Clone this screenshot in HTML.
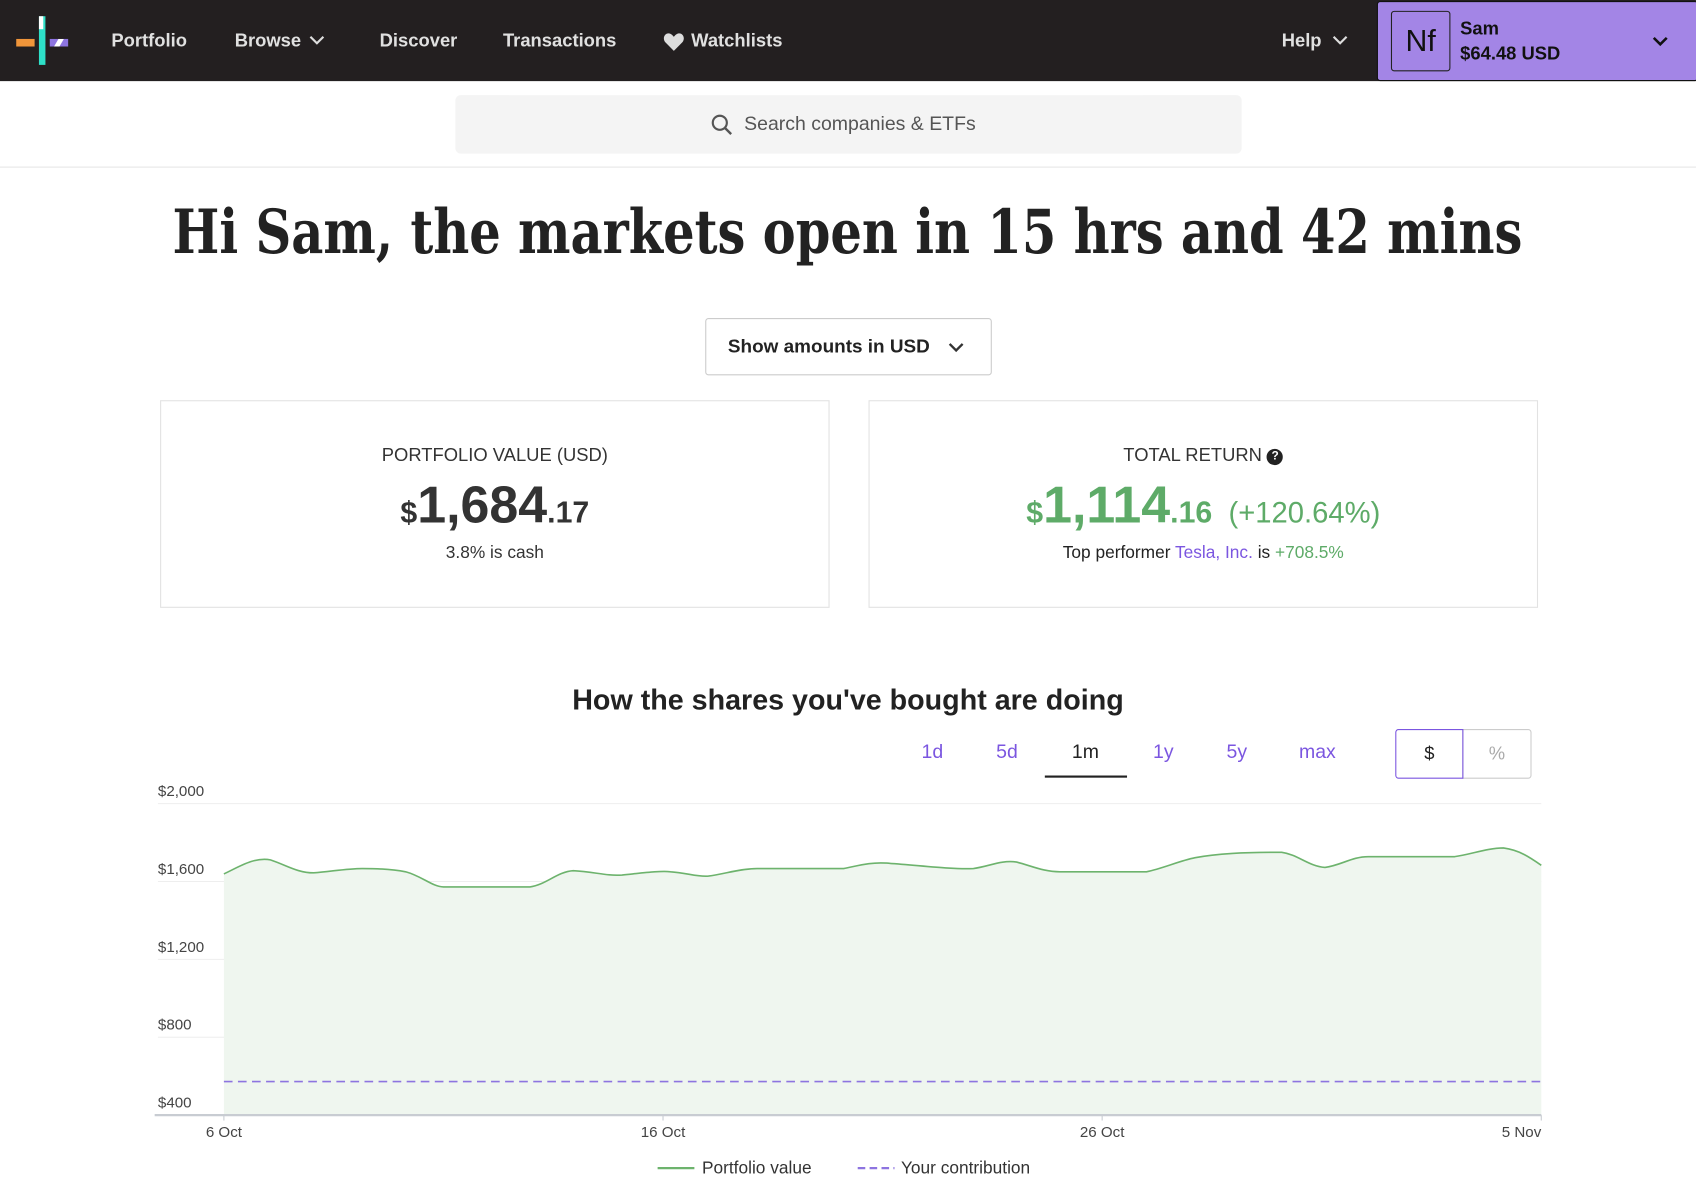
<!DOCTYPE html>
<html><head><meta charset="utf-8"><style>
html,body{margin:0;padding:0;width:1696px;height:1186px;overflow:hidden;background:#fff;}
#w{position:absolute;left:0;top:0;width:1568px;height:1097px;transform:scale(1.0816);transform-origin:0 0;font-family:"Liberation Sans",Arial,sans-serif;color:#222;}
.a{position:absolute;white-space:nowrap;}
.nav{position:absolute;left:0;top:0;width:1568px;height:75px;background:#231f20;}
.ni{position:absolute;top:28px;font-size:17px;font-weight:bold;color:#e0e0e0;line-height:20px;}
.c{text-align:center;}
</style></head><body><div id="w">
<div class="nav"></div>
<div class="a" style="left:15px;top:36px;width:17px;height:7px;background:#f0953a"></div>
<div class="a" style="left:36px;top:15px;width:6px;height:45px;background:#2ee0c8"></div>
<div class="a" style="left:36px;top:15px;width:4px;height:12px;background:#fff"></div>
<div class="a" style="left:46px;top:36px;width:17px;height:7px;background:#8d74e0"></div>
<div class="a" style="left:52px;top:36px;width:5px;height:7px;background:#fff;transform:skewX(-30deg)"></div>
<div class="ni" style="left:103px">Portfolio</div>
<div class="ni" style="left:217px">Browse</div>
<svg class="a" style="left:286px;top:32px" width="14" height="10"><path d="M1 2 L7 8 L13 2" stroke="#ddd" stroke-width="2" fill="none"/></svg>
<div class="ni" style="left:351px">Discover</div>
<div class="ni" style="left:465px">Transactions</div>
<svg class="a" style="left:613px;top:30px" width="20" height="18"><path d="M10 17 L2 9 C-1 5 2 0 6 1 C8 1.5 9 3 10 4 C11 3 12 1.5 14 1 C18 0 21 5 18 9 Z" fill="#ddd"/></svg>
<div class="ni" style="left:639px">Watchlists</div>
<div class="ni" style="left:1185px">Help</div>
<svg class="a" style="left:1232px;top:32px" width="14" height="10"><path d="M1 2 L7 8 L13 2" stroke="#ddd" stroke-width="2" fill="none"/></svg>
<div class="a" style="left:1273px;top:1px;width:297px;height:74px;background:#a385e6;border:1px solid #111;border-radius:3px;box-sizing:border-box"></div>
<div class="a" style="left:1286px;top:10px;width:55px;height:56px;border:1px solid #222;border-radius:3px;box-sizing:border-box;font-size:28px;line-height:54px;text-align:center;color:#111">Nf</div>
<div class="a" style="left:1350px;top:17px;font-size:17px;font-weight:bold;color:#111">Sam</div>
<div class="a" style="left:1350px;top:40px;font-size:17px;font-weight:bold;color:#111">$64.48 USD</div>
<svg class="a" style="left:1527px;top:33px" width="16" height="10"><path d="M2 2 L8 8 L14 2" stroke="#111" stroke-width="2.4" fill="none"/></svg>
<div class="a" style="left:421px;top:88px;width:727px;height:54px;background:#f4f4f4;border-radius:5px"></div>
<svg class="a" style="left:657px;top:105px" width="22" height="22"><circle cx="8.5" cy="8.5" r="6.5" stroke="#555" stroke-width="2" fill="none"/><path d="M13 13 L19 19" stroke="#555" stroke-width="2.2"/></svg>
<div class="a" style="left:688px;top:104px;font-size:18px;color:#555">Search companies &amp; ETFs</div>
<div class="a" style="left:0;top:154px;width:1568px;height:1px;background:#e6e6e6"></div>
<div class="a" style="left:0;top:182px;width:1568px;text-align:center"><span id="h" style="display:inline-block;font-family:'DejaVu Serif','Liberation Serif',serif;font-weight:bold;font-size:56px;line-height:66px;color:#222;transform-origin:center">Hi Sam, the markets open in 15 hrs and 42 mins</span></div>
<div class="a" style="left:652px;top:294px;width:265px;height:53px;border:1px solid #ccc;border-radius:3px;box-sizing:border-box"></div>
<div class="a" style="left:673px;top:310px;font-size:17.5px;font-weight:bold;color:#222">Show amounts in USD</div>
<svg class="a" style="left:877px;top:316px" width="14" height="10"><path d="M1 2 L7 8 L13 2" stroke="#333" stroke-width="2.2" fill="none"/></svg>
<div class="a" style="left:148px;top:370px;width:619px;height:192px;border:1px solid #e2e2e2;box-sizing:border-box"></div>
<div class="a" style="left:803px;top:370px;width:619px;height:192px;border:1px solid #e2e2e2;box-sizing:border-box"></div>
<div class="a c" style="left:148px;top:411px;width:619px;font-size:17px;color:#333">PORTFOLIO VALUE (USD)</div>
<div class="a c" style="left:148px;top:440px;width:619px;color:#333;font-weight:bold"><span style="font-size:28px">$</span><span style="font-size:48px">1,684</span><span style="font-size:28px">.17</span></div>
<div class="a c" style="left:148px;top:503px;width:619px;font-size:16px;color:#333">3.8% is cash</div>
<div class="a c" style="left:803px;top:411px;width:619px;font-size:17px;color:#333">TOTAL RETURN <span style="display:inline-block;width:15px;height:15px;border-radius:50%;background:#222;color:#fff;font-size:11px;line-height:15px;font-weight:bold;vertical-align:1px">?</span></div>
<div class="a c" style="left:803px;top:440px;width:619px;color:#5eab68"><b><span style="font-size:28px">$</span><span style="font-size:48px">1,114</span><span style="font-size:28px">.16</span></b><span style="font-size:27px">&nbsp;&nbsp;(+120.64%)</span></div>
<div class="a c" style="left:803px;top:503px;width:619px;font-size:16px;color:#222">Top performer <span style="color:#7b56e0">Tesla, Inc.</span> is <span style="color:#5eab68">+708.5%</span></div>
<div class="a c" style="left:0;top:632px;width:1568px;font-size:26.5px;font-weight:bold;color:#222">How the shares you've bought are doing</div>
<div class="a" style="left:852px;top:685px;font-size:18px;color:#7b56e0">1d</div>
<div class="a" style="left:921px;top:685px;font-size:18px;color:#7b56e0">5d</div>
<div class="a" style="left:991px;top:685px;font-size:18px;color:#222">1m</div>
<div class="a" style="left:966px;top:717px;width:76px;height:2px;background:#222"></div>
<div class="a" style="left:1066px;top:685px;font-size:18px;color:#7b56e0">1y</div>
<div class="a" style="left:1134px;top:685px;font-size:18px;color:#7b56e0">5y</div>
<div class="a" style="left:1201px;top:685px;font-size:18px;color:#7b56e0">max</div>
<div class="a" style="left:1352px;top:674px;width:64px;height:46px;border:1px solid #ccc;box-sizing:border-box;border-radius:0 3px 3px 0;text-align:center;line-height:44px;font-size:17px;color:#aaa">%</div>
<div class="a" style="left:1290px;top:674px;width:63px;height:46px;border:1px solid #7b56e0;box-sizing:border-box;border-radius:3px 0 0 3px;text-align:center;line-height:44px;font-size:17px;color:#222">$</div>
<svg class="a" style="left:0;top:720px" width="1568" height="377" font-family="Liberation Sans,Arial,sans-serif" font-size="14" fill="#444">
<text x="146" y="16">$2,000</text><text x="146" y="88">$1,600</text><text x="146" y="160">$1,200</text><text x="146" y="232">$800</text><text x="146" y="304">$400</text>
<g stroke="#eee" stroke-width="1"><line x1="146" y1="23" x2="1425" y2="23"/><line x1="146" y1="95" x2="1425" y2="95"/><line x1="146" y1="167" x2="1425" y2="167"/><line x1="146" y1="239" x2="1425" y2="239"/></g>
<path d="M207 88 C220 82 235 72 250 75 C265 80 275 87 290 87 C305 86 320 83 335 83 C350 83 365 84 375 86 C390 90 400 100 410 100 L490 100 C505 98 515 86 530 85 C550 86 560 90 575 89 C595 87 610 85 620 86 C635 87 645 91 655 90 C670 88 685 83 700 83 L780 83 C795 80 805 77 820 78 C850 80 880 84 900 83 C915 81 925 75 940 77 C955 81 965 86 980 86 L1060 86 C1075 83 1090 76 1105 73 C1125 69 1150 68 1185 68 C1200 70 1210 81 1225 82 C1240 80 1250 72 1265 72 L1345 72 C1360 70 1375 64 1390 64 C1405 66 1415 73 1425 80 L1425 311 L207 311 Z" fill="#eff6ef" stroke="none"/>
<path d="M207 88 C220 82 235 72 250 75 C265 80 275 87 290 87 C305 86 320 83 335 83 C350 83 365 84 375 86 C390 90 400 100 410 100 L490 100 C505 98 515 86 530 85 C550 86 560 90 575 89 C595 87 610 85 620 86 C635 87 645 91 655 90 C670 88 685 83 700 83 L780 83 C795 80 805 77 820 78 C850 80 880 84 900 83 C915 81 925 75 940 77 C955 81 965 86 980 86 L1060 86 C1075 83 1090 76 1105 73 C1125 69 1150 68 1185 68 C1200 70 1210 81 1225 82 C1240 80 1250 72 1265 72 L1345 72 C1360 70 1375 64 1390 64 C1405 66 1415 73 1425 80" fill="none" stroke="#6db36d" stroke-width="1.5"/>
<line x1="207" y1="280" x2="1425" y2="280" stroke="#8d74e0" stroke-width="1.5" stroke-dasharray="8,5"/>
<line x1="143" y1="311" x2="1425" y2="311" stroke="#c8ccd2" stroke-width="2"/>
<g stroke="#c8ccd2"><line x1="207" y1="311" x2="207" y2="316"/><line x1="613" y1="311" x2="613" y2="316"/><line x1="1019" y1="311" x2="1019" y2="316"/><line x1="1425" y1="311" x2="1425" y2="316"/></g>
<text x="207" y="331" text-anchor="middle">6 Oct</text><text x="613" y="331" text-anchor="middle">16 Oct</text><text x="1019" y="331" text-anchor="middle">26 Oct</text><text x="1425" y="331" text-anchor="end">5 Nov</text>
<line x1="608" y1="360" x2="642" y2="360" stroke="#6db36d" stroke-width="2"/>
<text x="649" y="365" font-size="16" fill="#333">Portfolio value</text>
<line x1="793" y1="360" x2="827" y2="360" stroke="#8d74e0" stroke-width="2" stroke-dasharray="7,4"/>
<text x="833" y="365" font-size="16" fill="#333">Your contribution</text>
</svg>
</div>
<script>
var h=document.getElementById('h');var w=h.getBoundingClientRect().width/1.0816;h.style.transform='scaleX('+(1248/w)+')';
</script>
</body></html>
